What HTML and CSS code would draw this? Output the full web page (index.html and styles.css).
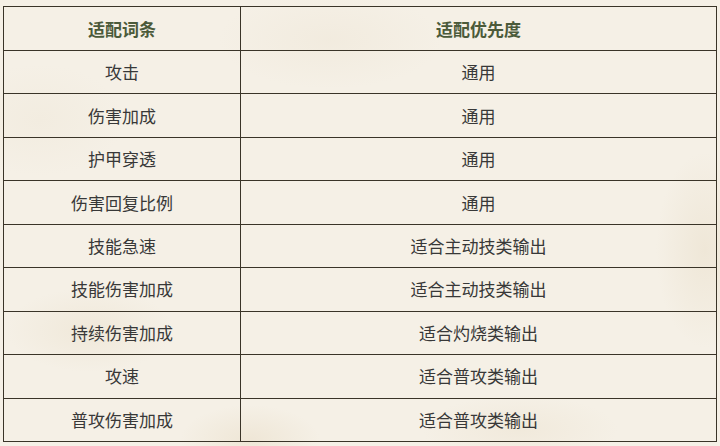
FILE: index.html
```html
<!DOCTYPE html>
<html lang="zh-CN">
<head>
<meta charset="utf-8">
<title>适配词条</title>
<link rel="stylesheet" href="styles.css">
</head>
<body>
<div class="page">
  <table class="affix-table">
    <thead>
      <tr><th class="col-affix">适配词条</th><th>适配优先度</th></tr>
    </thead>
    <tbody>
      <tr><td>攻击</td><td>通用</td></tr>
      <tr><td>伤害加成</td><td>通用</td></tr>
      <tr><td>护甲穿透</td><td>通用</td></tr>
      <tr><td>伤害回复比例</td><td>通用</td></tr>
      <tr><td>技能急速</td><td>适合主动技类输出</td></tr>
      <tr><td>技能伤害加成</td><td>适合主动技类输出</td></tr>
      <tr><td>持续伤害加成</td><td>适合灼烧类输出</td></tr>
      <tr><td>攻速</td><td>适合普攻类输出</td></tr>
      <tr><td>普攻伤害加成</td><td>适合普攻类输出</td></tr>
    </tbody>
  </table>
</div>
</body>
</html>
```
FILE: styles.css
```css
html, body {
  margin: 0;
  padding: 0;
}
body {
  width: 720px;
  height: 446px;
  overflow: hidden;
  font-family: "Noto Sans CJK SC", "Noto Sans", sans-serif;
  background-color: #f5f0e6;
  background-image:
    radial-gradient(ellipse 120px 60px at 90px 330px, rgba(226, 212, 185, 0.28), rgba(226, 212, 185, 0) 70%),
    radial-gradient(ellipse 160px 70px at 330px 40px, rgba(230, 218, 196, 0.22), rgba(230, 218, 196, 0) 70%),
    radial-gradient(ellipse 70px 140px at 705px 250px, rgba(225, 210, 182, 0.3), rgba(225, 210, 182, 0) 70%),
    radial-gradient(ellipse 140px 50px at 520px 430px, rgba(228, 214, 188, 0.25), rgba(228, 214, 188, 0) 70%),
    radial-gradient(ellipse 100px 50px at 250px 440px, rgba(224, 208, 178, 0.3), rgba(224, 208, 178, 0) 70%),
    radial-gradient(ellipse 120px 80px at 40px 120px, rgba(232, 222, 202, 0.22), rgba(232, 222, 202, 0) 70%);
}
.page {
  padding: 6px 0 0 3px;
}
.affix-table {
  width: 714px;
  border-collapse: collapse;
  table-layout: fixed;
}
.affix-table th,
.affix-table td {
  border: 1px solid #3a3428;
  text-align: center;
  vertical-align: middle;
  padding: 0;
  font-size: 17px;
  line-height: 20px;
}
.affix-table th {
  height: 43px;
  font-weight: bold;
  color: #4b5a3a;
}
.affix-table td {
  height: 42.45px;
  color: #383838;
}
.col-affix {
  width: 236px;
}
```
